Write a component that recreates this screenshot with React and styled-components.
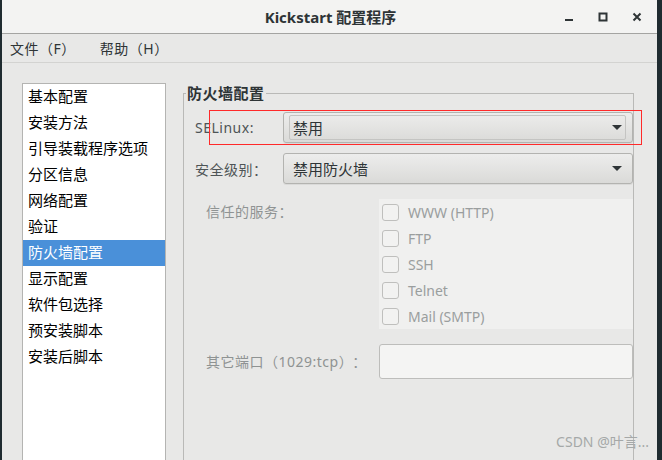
import React from "react";
import styled, { createGlobalStyle } from "styled-components";

const GlobalStyle = createGlobalStyle`
  html, body {
    margin: 0;
    padding: 0;
    background: #1f2b30;
    font-family: "Noto Sans", "Noto Sans CJK SC", sans-serif;
  }
`;

const navItems = [
  "基本配置",
  "安装方法",
  "引导装载程序选项",
  "分区信息",
  "网络配置",
  "验证",
  "防火墙配置",
  "显示配置",
  "软件包选择",
  "预安装脚本",
  "安装后脚本",
];

const services = ["WWW (HTTP)", "FTP", "SSH", "Telnet", "Mail (SMTP)"];

const App = () => {
  return (
    <>
      <GlobalStyle />
      <Screen>
        <Window>
          <TitleBar>
            <Title>Kickstart 配置程序</Title>
            <Controls>
              <ControlBtn>
                <svg width="10" height="10" viewBox="0 0 10 10">
                  <rect x="1" y="7" width="8" height="2" fill="#2e3436" />
                </svg>
              </ControlBtn>
              <ControlBtn>
                <svg width="10" height="10" viewBox="0 0 10 10">
                  <rect x="1.5" y="1.5" width="7" height="7" fill="none" stroke="#2e3436" strokeWidth="2" />
                </svg>
              </ControlBtn>
              <ControlBtn>
                <svg width="10" height="10" viewBox="0 0 10 10">
                  <path d="M1.5 1.5 L8.5 8.5 M8.5 1.5 L1.5 8.5" stroke="#2e3436" strokeWidth="2" />
                </svg>
              </ControlBtn>
            </Controls>
          </TitleBar>
          <MenuBar>
            <MenuItem>文件（F）</MenuItem>
            <MenuItem>帮助（H）</MenuItem>
          </MenuBar>
          <Body>
            <NavList>
              {navItems.map((item) => (
                <NavItem key={item} $active={item === "防火墙配置"}>
                  {item}
                </NavItem>
              ))}
            </NavList>
            <Frame>
              <Legend>防火墙配置</Legend>
              <FormRow>
                <Label>SELinux:</Label>
                <Combo>
                  <ComboFocus>
                    <span>禁用</span>
                    <Arrow />
                  </ComboFocus>
                </Combo>
                <Marker />
              </FormRow>
              <FormRow $gap={10}>
                <Label>安全级别：</Label>
                <Combo>
                  <ComboInner>
                    <span>禁用防火墙</span>
                    <Arrow />
                  </ComboInner>
                </Combo>
              </FormRow>
              <DisabledRow $gap={15}>
                <DimLabel>信任的服务：</DimLabel>
                <ServiceBox>
                  {services.map((s) => (
                    <ServiceItem key={s}>
                      <CheckBox />
                      <span>{s}</span>
                    </ServiceItem>
                  ))}
                </ServiceBox>
              </DisabledRow>
              <PortRow $gap={15}>
                <DimLabel>
                  其它端口（1029:tcp）<Colon>：</Colon>
                </DimLabel>
                <PortInput />
              </PortRow>
            </Frame>
          </Body>
          <Watermark>CSDN @叶言...</Watermark>
        </Window>
      </Screen>
    </>
  );
};

const Screen = styled.div`
  height: 460px;
  width: 662px;
  overflow: hidden;
  padding: 0 5px 0 2px;
  box-sizing: border-box;
  background: #1f2b30;
`;

const Window = styled.div`
  position: relative;
  height: 100%;
  display: flex;
  flex-direction: column;
  background: #e8e8e7;
  overflow: hidden;
`;

const TitleBar = styled.div`
  height: 33px;
  flex-shrink: 0;
  background: #f3f3f2;
  border-bottom: 1px solid #a4a4a2;
  display: flex;
  align-items: center;
  justify-content: center;
  position: relative;
`;

const Title = styled.div`
  font-size: 15px;
  font-weight: bold;
  color: #2e3436;
  margin-left: 2px;
`;

const Controls = styled.div`
  position: absolute;
  right: 10px;
  top: 10px;
  display: flex;
  gap: 14px;
`;

const ControlBtn = styled.div`
  width: 20px;
  height: 14px;
  display: flex;
  align-items: center;
  justify-content: center;
`;

const MenuBar = styled.div`
  height: 28px;
  flex-shrink: 0;
  display: flex;
  align-items: center;
  gap: 24px;
  padding-left: 8px;
  border-bottom: 1px solid #d3d3d1;
  background: #e8e8e7;
`;

const MenuItem = styled.div`
  font-size: 14px;
  letter-spacing: 0.5px;
  color: #2e3436;
`;

const Body = styled.div`
  flex: 1;
  display: flex;
  align-items: stretch;
  padding: 20px 23px 0 20px;
  min-height: 0;
`;

const NavList = styled.div`
  width: 142px;
  flex-shrink: 0;
  background: #ffffff;
  border: 1px solid #b4b4b2;
  border-bottom: none;
  margin-bottom: -40px;
`;

const NavItem = styled.div`
  height: 26px;
  line-height: 25px;
  padding-left: 5px;
  font-size: 15px;
  color: ${(p) => (p.$active ? "#ffffff" : "#000000")};
  background: ${(p) => (p.$active ? "#4a90d9" : "transparent")};
`;

const Frame = styled.fieldset`
  flex: 1;
  margin: 0 0 -40px 17px;
  padding: 9px 0 0 11px;
  border: 1px solid #b9b9b7;
  min-width: 0;
`;

const Legend = styled.legend`
  padding: 0 1px;
  margin-left: -9px;
  font-size: 15px;
  line-height: 20px;
  font-weight: bold;
  letter-spacing: 0.5px;
  color: #2e3436;
`;

const FormRow = styled.div`
  position: relative;
  display: flex;
  align-items: center;
  height: 31px;
  margin-top: ${(p) => p.$gap || 0}px;
`;

const Label = styled.div`
  width: 88px;
  flex-shrink: 0;
  font-size: 14px;
  letter-spacing: 0.5px;
  color: #4e5456;
`;

const Combo = styled.div`
  flex: 1;
  height: 100%;
  box-sizing: border-box;
  border: 1px solid #b3b3b0;
  border-radius: 3px;
  background: linear-gradient(#ededec, #dadad8);
  box-shadow: 0 1px 0 rgba(0, 0, 0, 0.06);
  padding: 2px 6px 2px 5px;
  display: flex;
`;

const ComboInner = styled.div`
  flex: 1;
  display: flex;
  align-items: center;
  justify-content: space-between;
  padding: 0 3px 0 3px;
  font-size: 15px;
  color: #2e3436;
  border: 1px solid transparent;
`;

const ComboFocus = styled(ComboInner)`
  border: 1px solid #c4c4c2;
  border-radius: 2px;
`;

const Arrow = styled.div`
  width: 0;
  height: 0;
  border-left: 5px solid transparent;
  border-right: 5px solid transparent;
  border-top: 5px solid #2e3436;
`;

const Marker = styled.div`
  position: absolute;
  left: 14px;
  right: -9px;
  top: -2px;
  bottom: -2px;
  border: 1px solid #ff2a2a;
  pointer-events: none;
`;

const DisabledRow = styled.div`
  display: flex;
  align-items: flex-start;
  margin-top: ${(p) => p.$gap || 0}px;
`;

const PortRow = styled(DisabledRow)`
  align-items: center;
`;

const DimLabel = styled.div`
  width: 173px;
  flex-shrink: 0;
  padding-left: 11px;
  font-size: 14px;
  line-height: 26px;
  letter-spacing: 0.5px;
  color: #8f9393;
  white-space: nowrap;
`;

const Colon = styled.span`
  margin-left: 6px;
`;

const ServiceBox = styled.div`
  flex: 1;
  background: #f0f0ef;
  height: 130px;
  padding-left: 3px;
`;

const ServiceItem = styled.div`
  height: 26px;
  display: flex;
  align-items: center;
  gap: 9px;
  font-size: 14px;
  color: #9a9e9e;
`;

const CheckBox = styled.div`
  width: 15px;
  height: 15px;
  border: 1px solid #bfbfbd;
  border-radius: 3px;
  background: #f2f2f1;
`;

const PortInput = styled.div`
  flex: 1;
  height: 35px;
  box-sizing: border-box;
  border: 1px solid #bdbdbb;
  border-radius: 3px;
  background: #f4f4f3;
`;

const Watermark = styled.div`
  position: absolute;
  right: 8px;
  bottom: 9px;
  font-size: 14px;
  color: #a5a8a8;
`;

export default App;
